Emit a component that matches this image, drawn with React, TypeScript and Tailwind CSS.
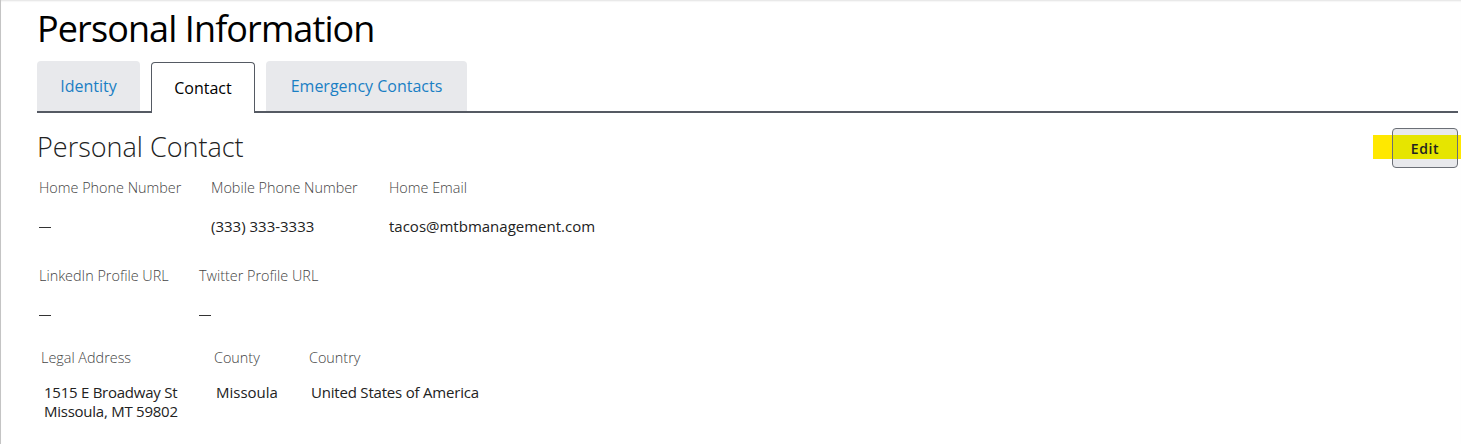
import React from "react";

const font = { fontFamily: '"Open Sans", "Noto Sans", sans-serif' };

function Label({ children }: { children: React.ReactNode }) {
  return <div className="text-[14.4px] font-light text-[#444] leading-[20px]">{children}</div>;
}

function Dash() {
  return <span className="inline-block w-[12px] h-[1px] bg-[#333] align-middle"></span>;
}

function Field({ label, value }: { label: string; value: React.ReactNode }) {
  return (
    <div className="flex flex-col">
      <Label>{label}</Label>
      <div className="mt-[18px] h-[20px] text-[15px] text-[#222] leading-[20px]">{value}</div>
    </div>
  );
}

export default function App() {
  return (
    <div className="w-[1461px] h-[444px] bg-white overflow-hidden border-l border-[#c4c4c4] shadow-[inset_0_2px_2px_-1px_rgba(0,0,0,0.12)]" style={font}>
      <div className="pl-[36px] pr-[3px]">
        <h1 className="pt-[6px] text-[36px] leading-[46px] text-black font-normal tracking-[-0.9px]">Personal Information</h1>
        <div className="mt-[10px] flex items-end gap-[11px] border-b-2 border-[#555a63] h-[51px]">
          <div className="w-[103px] h-[50px] rounded-t-[4px] bg-[#e8e9ec] flex items-center justify-center text-[16px] text-[#1a7fc4]">Identity</div>
          <div className="w-[104px] h-[51px] -mb-[2px] rounded-t-[4px] bg-white border border-b-0 border-[#555a63] flex items-center justify-center text-[16px] text-black">Contact</div>
          <div className="w-[201px] h-[50px] rounded-t-[4px] bg-[#e8e9ec] flex items-center justify-center text-[16px] text-[#1a7fc4]">Emergency Contacts</div>
        </div>
        <div className="mt-[16px] flex items-start justify-between">
          <h2 className="text-[27px] font-light leading-[36px] text-[#222]">Personal Contact</h2>
          <div className="relative -mt-[1px]">
            <div className="absolute left-[-19px] top-[7px] w-[88px] h-[24px] bg-[#ffe800]"></div>
            <button className="relative w-[66px] h-[40px] rounded-[4px] border border-[#6b6f76] bg-[#e8e9ec] overflow-hidden">
              <span className="absolute left-0 right-0 top-[6px] h-[24px] bg-[#e6e500]"></span>
              <span className="relative text-[14px] font-semibold text-[#222] tracking-[0.6px]">Edit</span>
            </button>
          </div>
        </div>
        <div className="ml-[2px] mt-[10px] flex">
          <div className="w-[172px]"><Field label="Home Phone Number" value={<Dash />} /></div>
          <div className="w-[178px]"><Field label="Mobile Phone Number" value="(333) 333-3333" /></div>
          <Field label="Home Email" value="tacos@mtbmanagement.com" />
        </div>
        <div className="ml-[2px] mt-[30px] flex">
          <div className="w-[160px]"><Field label="LinkedIn Profile URL" value={<Dash />} /></div>
          <Field label="Twitter Profile URL" value={<Dash />} />
        </div>
        <div className="ml-[4px] mt-[24px] flex">
          <div className="w-[173px] flex flex-col">
            <Label>Legal Address</Label>
            <div className="mt-[15px] pl-[3px] text-[15px] text-[#222] leading-[19px] tracking-[-0.25px]">
              <div>1515 E Broadway St</div>
              <div>Missoula, MT 59802</div>
            </div>
          </div>
          <div className="w-[95px] flex flex-col">
            <Label>County</Label>
            <div className="mt-[15px] pl-[2px] text-[15px] text-[#222] leading-[19px]">Missoula</div>
          </div>
          <div className="flex flex-col">
            <Label>Country</Label>
            <div className="mt-[15px] pl-[2px] text-[15px] text-[#222] leading-[19px] tracking-[-0.2px]">United States of America</div>
          </div>
        </div>
      </div>
    </div>
  );
}
